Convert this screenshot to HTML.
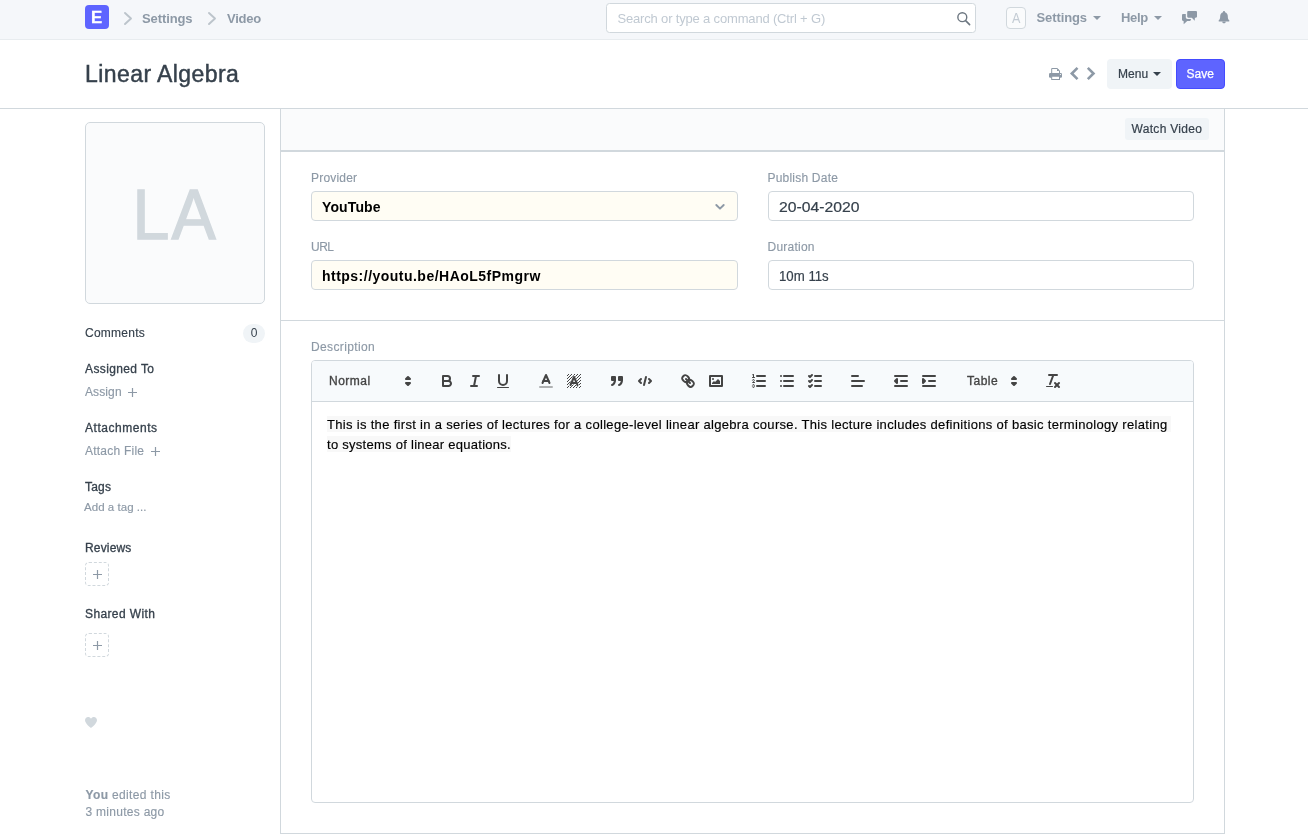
<!DOCTYPE html>
<html lang="en">
<head>
<meta charset="utf-8">
<title>Linear Algebra</title>
<style>
*{box-sizing:border-box;margin:0;padding:0}
html,body{width:1308px;height:838px;overflow:hidden;background:#fff}
body{font-family:"Liberation Sans",Arial,sans-serif;font-size:12px;color:#36414c;position:relative}
.abs{position:absolute;white-space:nowrap;line-height:1}
.t{position:absolute;white-space:nowrap;line-height:14px;height:14px}
.muted{color:#8d99a6;-webkit-text-stroke:.15px #8d99a6}
.navbar{position:absolute;left:0;top:0;width:1308px;height:40px;background:#f5f7fa;border-bottom:1px solid #e8ecef}
.pagehead{position:absolute;left:0;top:40px;width:1308px;height:69px;background:#fff;border-bottom:1px solid #d1d8dd}
.nb{font-weight:bold;font-size:13px;color:#8d99a6}
.lbl{color:#8d99a6;font-size:12px;-webkit-text-stroke:.15px #8d99a6}
.sh{font-size:12px;color:#36414c;-webkit-text-stroke:.3px #36414c}
.inp{position:absolute;height:30px;border:1px solid #d1d8dd;border-radius:4px;background:#fff}
.inp.b{background:#fffdf4}
.inp span{position:absolute;left:10px;white-space:nowrap}
svg{position:absolute;overflow:visible}
.qs{fill:none;stroke:#444;stroke-width:2;stroke-linecap:round;stroke-linejoin:round}
.qf{fill:#444}
.qt{stroke-width:1}
</style>
</head>
<body>
<div id="wrap" style="position:absolute;left:0;top:0;width:1308px;height:838px;will-change:transform">
<!-- NAVBAR -->
<div class="navbar"></div>
<div class="abs" style="left:85px;top:5px;width:24px;height:24px;background:#5e64ff;border-radius:4px"></div>
<div class="abs" style="left:84.700px;top:6px;width:24px;height:24px;color:#fff;font-weight:bold;font-size:16.800px;line-height:24px;text-align:center;-webkit-text-stroke:.3px #fff">E</div>
<svg style="left:123px;top:12px" width="10" height="13" viewBox="0 0 10 13"><path d="M2 1 L8 6.5 L2 12" fill="none" stroke="#bcc4cb" stroke-width="1.900" stroke-linecap="round" stroke-linejoin="round"/></svg>
<div class="t nb" style="left:142px;top:12px;letter-spacing:-.1px">Settings</div>
<svg style="left:207px;top:12px" width="10" height="13" viewBox="0 0 10 13"><path d="M2 1 L8 6.5 L2 12" fill="none" stroke="#bcc4cb" stroke-width="1.900" stroke-linecap="round" stroke-linejoin="round"/></svg>
<div class="t nb" style="left:227px;top:12px;letter-spacing:-.23px">Video</div>

<div class="abs" style="left:606px;top:3px;width:370px;height:30px;background:#fff;border:1px solid #d1d8dd;border-radius:3.500px"></div>
<div class="t" style="left:617.5px;top:12px;font-size:13px;color:#c0c9d2;letter-spacing:-.17px">Search or type a command (Ctrl + G)</div>
<svg style="left:956px;top:11.400px" width="15" height="15" viewBox="0 0 15 15"><circle cx="6.300" cy="6.200" r="4.450" fill="none" stroke="#6c7680" stroke-width="1.4"/><path d="M9.6 9.6 L13.6 13.6" stroke="#6c7680" stroke-width="1.6" stroke-linecap="round"/></svg>

<div class="abs" style="left:1006px;top:7px;width:20px;height:22px;border:1px solid #d1d8dd;border-radius:4px;background:#fafbfc;color:#c4ccd4;font-size:14px;line-height:21px;text-align:center"><span style="display:inline-block;transform:scaleX(.9) translateX(.5px)">A</span></div>
<div class="t nb" style="left:1036.5px;top:11px;letter-spacing:-.1px">Settings</div>
<svg style="left:1093px;top:16px" width="8" height="4" viewBox="0 0 8 4"><path d="M0 0h8L4 4z" fill="#8d99a6"/></svg>
<div class="t nb" style="left:1121px;top:11px;letter-spacing:-.34px">Help</div>
<svg style="left:1154px;top:16px" width="8" height="4" viewBox="0 0 8 4"><path d="M0 0h8L4 4z" fill="#8d99a6"/></svg>
<!-- comments icon -->
<svg style="left:1182px;top:11px" width="15" height="13" viewBox="0 0 15 13"><path d="M6.400 0h7.400c.7 0 1.200.5 1.200 1.200v4.300c0 .7-.5 1.200-1.200 1.200H12.900L12.700 9.800 9.800 6.700H6.400C5.700 6.700 5.200 6.200 5.200 5.500V1.200C5.200.5 5.700 0 6.400 0z" fill="#8d99a6"/><path d="M1.200 3H3.800v3.200C3.800 7.200 4.600 7.900 5.500 7.900H8.900v.9c0 .7-.5 1.200-1.200 1.200H5.200L1.700 13.200 1.600 10H1.200C.5 10 0 9.500 0 8.800V4.200C0 3.500.5 3 1.200 3z" fill="#8d99a6"/></svg>
<!-- bell -->
<svg style="left:1218px;top:10.500px" width="12" height="12.500" viewBox="0 0 12 12.500"><path d="M6 0C6.600 0 7 .4 7 1L7 1.200C8.700 1.700 9.800 3.200 9.800 5C9.800 7.600 10.400 8.600 11.300 9.500C11.600 9.800 11.500 10.400 11 10.400L1 10.400C.5 10.400 .4 9.800 .7 9.500C1.600 8.600 2.200 7.600 2.200 5C2.200 3.200 3.300 1.700 5 1.200L5 1C5 .4 5.400 0 6 0ZM4.300 10.700h3.400c0 .9-.8 1.600-1.700 1.600s-1.700-.7-1.700-1.600z" fill="#8d99a6"/></svg>

<!-- PAGE HEAD -->
<div class="pagehead"></div>
<div class="abs" style="left:85px;top:60px;font-size:23px;line-height:28px;color:#36414c;letter-spacing:.42px;-webkit-text-stroke:.45px #36414c">Linear Algebra</div>
<!-- print -->
<svg style="left:1049px;top:68px" width="13" height="12" viewBox="0 0 13 12"><path d="M2.700 5.500V.5h5.600L10.500 2.700V5.500" fill="#fff" stroke="#8d99a6" stroke-width="1"/><path d="M8 .5V3h2.500z" fill="#8d99a6"/><rect x="0" y="5" width="13" height="4.700" rx="1.200" fill="#8d99a6"/><rect x="2.700" y="8.200" width="7.800" height="3.300" fill="#fff" stroke="#8d99a6" stroke-width="1"/><circle cx="11.400" cy="6.500" r=".6" fill="#fff"/></svg>
<svg style="left:1070px;top:67px" width="9" height="13" viewBox="0 0 9 13"><path d="M7.500 .8 L1.800 6.500 L7.500 12.200" fill="none" stroke="#8d99a6" stroke-width="2.600" stroke-linejoin="miter"/></svg>
<svg style="left:1086px;top:67px" width="9" height="13" viewBox="0 0 9 13"><path d="M1.800 .8 L7.500 6.500 L1.800 12.200" fill="none" stroke="#8d99a6" stroke-width="2.600" stroke-linejoin="miter"/></svg>
<div class="abs" style="left:1107px;top:59px;width:65px;height:30px;background:#f0f4f7;border-radius:4px"></div>
<div class="t" style="left:1118px;top:67px;color:#36414c;letter-spacing:.08px;-webkit-text-stroke:.2px #36414c">Menu</div>
<svg style="left:1153px;top:72px" width="8" height="4" viewBox="0 0 8 4"><path d="M0 0h8L4 4z" fill="#36414c"/></svg>
<div class="abs" style="left:1176px;top:59px;width:49px;height:30px;background:#5e64ff;border:1px solid #444bff;border-radius:4px"></div>
<div class="t" style="left:1186.500px;top:67px;color:#fff;-webkit-text-stroke:.25px #fff">Save</div>

<!-- SIDEBAR -->
<div class="abs" style="left:85px;top:122px;width:180px;height:182px;border:1px solid #d1d8dd;border-radius:5px;background:#fafbfc"></div>
<div class="abs" style="left:84.300px;top:123.500px;width:180px;height:182px;text-align:center;font-size:70.500px;line-height:182px;color:#d1d8dd;-webkit-text-stroke:1.400px #d1d8dd;transform:scaleX(.94);transform-origin:91.500px 0"><span style="letter-spacing:2.200px">L</span>A</div>

<div class="t" style="left:85px;top:326px;letter-spacing:.25px;-webkit-text-stroke:.15px #36414c">Comments</div>
<div class="abs" style="left:243px;top:323.500px;width:22px;height:19px;border-radius:9.500px;background:#f0f4f7;text-align:center;line-height:19px;font-size:12px">0</div>

<div class="t sh" style="left:85px;top:362px;letter-spacing:0.38px">Assigned To</div>
<div class="t muted" style="left:85px;top:385px;letter-spacing:.11px">Assign</div>
<svg style="left:127.500px;top:387.500px" width="9" height="9" viewBox="0 0 9 9"><path d="M4.500 0v9M0 4.500h9" stroke="#8d99a6" stroke-width="1.200" fill="none"/></svg>

<div class="t sh" style="left:85px;top:421px;letter-spacing:0.53px">Attachments</div>
<div class="t muted" style="left:85px;top:444px;letter-spacing:.23px">Attach File</div>
<svg style="left:150.500px;top:446.500px" width="9" height="9" viewBox="0 0 9 9"><path d="M4.500 0v9M0 4.500h9" stroke="#8d99a6" stroke-width="1.200" fill="none"/></svg>

<div class="t sh" style="left:85px;top:480px;letter-spacing:0.22px">Tags</div>
<div class="t muted" style="left:84px;top:499.500px;font-size:11.5px;letter-spacing:.04px">Add a tag ...</div>

<div class="t sh" style="left:85px;top:541px;letter-spacing:0.16px">Reviews</div>
<div class="abs" style="left:85px;top:562px;width:24px;height:24px;border:1px dashed #d1d8dd;border-radius:4px"></div>
<svg style="left:92.500px;top:569.500px" width="9" height="9" viewBox="0 0 9 9"><path d="M4.500 0v9M0 4.500h9" stroke="#8d99a6" stroke-width="1.200" fill="none"/></svg>

<div class="t sh" style="left:85px;top:607px;letter-spacing:0.38px">Shared With</div>
<div class="abs" style="left:85px;top:633px;width:24px;height:24px;border:1px dashed #d1d8dd;border-radius:4px"></div>
<svg style="left:92.500px;top:640.500px" width="9" height="9" viewBox="0 0 9 9"><path d="M4.500 0v9M0 4.500h9" stroke="#8d99a6" stroke-width="1.200" fill="none"/></svg>

<svg style="left:85px;top:717px" width="12" height="11" viewBox="0 0 12 11"><path d="M6 11 C6 11 0 6.500 0 3.200 C0 1.300 1.400 0 3.100 0 C4.300 0 5.400.7 6 1.700 C6.600.7 7.700 0 8.900 0 C10.600 0 12 1.300 12 3.200 C12 6.500 6 11 6 11z" fill="#d1d8dd"/></svg>

<div class="t muted" style="left:85.500px;top:788px;letter-spacing:.35px"><b>You</b> edited this</div>
<div class="t muted" style="left:85.500px;top:805px;letter-spacing:.28px">3 minutes ago</div>

<!-- MAIN -->
<div class="abs" style="left:280px;top:109px;width:945px;height:725px;border:1px solid #d1d8dd;border-top:0"></div>
<div class="abs" style="left:281px;top:109px;width:943px;height:43px;background:#fafbfc;border-bottom:2px solid #d1d8dd"></div>
<div class="abs" style="left:1125px;top:118px;width:84px;height:22px;background:#f0f4f7;border-radius:3px"></div>
<div class="t" style="left:1131.500px;top:122px;color:#36414c;letter-spacing:.31px;-webkit-text-stroke:.2px #36414c">Watch Video</div>
<div class="abs" style="left:281px;top:320px;width:943px;height:1px;background:#d1d8dd"></div>

<div class="t lbl" style="left:311px;top:171px;letter-spacing:.19px">Provider</div>
<div class="inp b" style="left:311px;top:191px;width:427px"><span style="top:7.500px;line-height:15px;font-weight:bold;font-size:14px;color:#000;letter-spacing:.12px">YouTube</span></div>
<svg style="left:715px;top:203.500px" width="10" height="6" viewBox="0 0 10 6"><path d="M1.300 1 L5 4.700 L8.700 1" fill="none" stroke="#8d99a6" stroke-width="1.900" stroke-linecap="round" stroke-linejoin="round"/></svg>
<div class="t lbl" style="left:311px;top:240px;letter-spacing:-.5px">URL</div>
<div class="inp b" style="left:311px;top:260px;width:427px"><span style="top:7.500px;line-height:15px;font-weight:bold;font-size:14px;color:#000;letter-spacing:.48px">https://youtu.be/HAoL5fPmgrw</span></div>

<div class="t lbl" style="left:767.500px;top:171px;letter-spacing:.21px">Publish Date</div>
<div class="inp" style="left:768px;top:191px;width:426px"><span style="top:7px;line-height:16px;font-size:14px;color:#36414c;transform:scaleX(1.124);transform-origin:0 0;-webkit-text-stroke:.2px #36414c">20-04-2020</span></div>
<div class="t lbl" style="left:767.500px;top:240px;letter-spacing:.24px">Duration</div>
<div class="inp" style="left:768px;top:260px;width:426px"><span style="top:7px;line-height:16px;font-size:14px;color:#36414c;transform:scaleX(.944);transform-origin:0 0;-webkit-text-stroke:.2px #36414c">10m 11s</span></div>

<div class="t lbl" style="left:311px;top:340px;letter-spacing:.36px">Description</div>
<div class="abs" style="left:311px;top:360px;width:883px;height:443px;border:1px solid #d1d8dd;border-radius:4px;background:#fff"></div>
<div class="abs" style="left:312px;top:361px;width:881px;height:41px;background:#f7fafc;border-bottom:1px solid #d1d8dd;border-radius:3px 3px 0 0"></div>
<!--TB-->
<svg style="left:399px;top:372px" width="18" height="18" viewBox="0 0 18 18"><polygon class="qs" points="7 11 9 13 11 11 7 11"/><polygon class="qs" points="11 7 9 5 7 7 11 7"/></svg>
<svg style="left:438px;top:372px" width="18" height="18" viewBox="0 0 18 18"><path class="qs" d="M5,4H9.5A2.5,2.5,0,0,1,12,6.500v0A2.5,2.5,0,0,1,9.500,9H5V4Z"/><path class="qs" d="M5,9h5.500A2.500,2.500,0,0,1,13,11.500v0A2.500,2.500,0,0,1,10.500,14H5V9Z"/></svg>
<svg style="left:466px;top:372px" width="18" height="18" viewBox="0 0 18 18"><line class="qs" x1="7" x2="13" y1="4" y2="4"/><line class="qs" x1="5" x2="11" y1="14" y2="14"/><line class="qs" x1="8" x2="10" y1="14" y2="4"/></svg>
<svg style="left:494px;top:372px" width="18" height="18" viewBox="0 0 18 18"><path class="qs" d="M5,3V9a4.012,4.012,0,0,0,4,4H9a4.012,4.012,0,0,0,4-4V3"/><rect class="qf" height="1" rx="0.5" ry="0.5" width="12" x="3" y="15"/></svg>
<svg style="left:537px;top:372px" width="18" height="18" viewBox="0 0 18 18"><line class="qs" style="opacity:.4" x1="3" x2="15" y1="15" y2="15"/><polyline class="qs" points="5.500 11 9 3 12.500 11"/><line class="qs" x1="11.630" x2="6.380" y1="9" y2="9"/></svg>
<svg style="left:565px;top:372px" width="18" height="18" viewBox="0 0 18 18"><path class="qf" d="M3 2h1v1h-1zM6 2h1v1h-1zM9 2h1v1h-1zM12 2h1v1h-1zM15 2h1v1h-1zM2 3h1v1h-1zM5 3h1v1h-1zM8 3h1v1h-1zM11 3h1v1h-1zM14 3h1v1h-1zM4 4h1v1h-1zM7 4h1v1h-1zM10 4h1v1h-1zM13 4h1v1h-1zM3 5h1v1h-1zM6 5h1v1h-1zM9 5h1v1h-1zM12 5h1v1h-1zM15 5h1v1h-1zM2 6h1v1h-1zM5 6h1v1h-1zM8 6h1v1h-1zM11 6h1v1h-1zM14 6h1v1h-1zM4 7h1v1h-1zM7 7h1v1h-1zM10 7h1v1h-1zM13 7h1v1h-1zM3 8h1v1h-1zM6 8h1v1h-1zM9 8h1v1h-1zM12 8h1v1h-1zM15 8h1v1h-1zM2 9h1v1h-1zM5 9h1v1h-1zM8 9h1v1h-1zM11 9h1v1h-1zM14 9h1v1h-1zM4 10h1v1h-1zM7 10h1v1h-1zM10 10h1v1h-1zM13 10h1v1h-1zM3 11h1v1h-1zM6 11h1v1h-1zM9 11h1v1h-1zM12 11h1v1h-1zM15 11h1v1h-1zM2 12h1v1h-1zM5 12h1v1h-1zM8 12h1v1h-1zM11 12h1v1h-1zM14 12h1v1h-1zM4 13h1v1h-1zM7 13h1v1h-1zM10 13h1v1h-1zM13 13h1v1h-1zM3 14h1v1h-1zM6 14h1v1h-1zM9 14h1v1h-1zM12 14h1v1h-1zM15 14h1v1h-1zM2 15h1v1h-1zM5 15h1v1h-1zM8 15h1v1h-1zM11 15h1v1h-1zM14 15h1v1h-1z"/><polyline points="5.500 13 9 5 12.500 13" fill="none" stroke="#f7fafc" stroke-width="3" stroke-linecap="round" stroke-linejoin="round"/><line x1="11.630" x2="6.380" y1="11" y2="11" stroke="#f7fafc" stroke-width="3"/><polyline class="qs" points="5.500 13 9 5 12.500 13"/><line class="qs" x1="11.630" x2="6.380" y1="11" y2="11"/></svg>
<svg style="left:608px;top:372px" width="18" height="18" viewBox="0 0 18 18"><rect class="qs qf" height="3" width="3" x="4" y="5"/><rect class="qs qf" height="3" width="3" x="11" y="5"/><path class="qs qf" fill-rule="evenodd" d="M7,8c0,4.031-3,5-3,5"/><path class="qs qf" fill-rule="evenodd" d="M14,8c0,4.031-3,5-3,5"/></svg>
<svg style="left:636px;top:372px" width="18" height="18" viewBox="0 0 18 18"><polyline class="qs" points="5 7 3 9 5 11"/><polyline class="qs" points="13 7 15 9 13 11"/><line class="qs" x1="10" x2="8" y1="5" y2="13"/></svg>
<svg style="left:679px;top:372px" width="18" height="18" viewBox="0 0 18 18"><line class="qs" x1="7" x2="11" y1="7" y2="11"/><path class="qs" d="M8.900,4.577a3.476,3.476,0,0,1,.36,4.679A3.476,3.476,0,0,1,4.577,8.900C3.185,7.500,2.035,6.400,4.217,4.217S7.500,3.185,8.900,4.577Z"/><path class="qs" d="M13.423,9.100a3.476,3.476,0,0,0-4.679-.36,3.476,3.476,0,0,0,.36,4.679c1.392,1.392,2.500,2.542,4.679.36S14.815,10.500,13.423,9.100Z"/></svg>
<svg style="left:707px;top:372px" width="18" height="18" viewBox="0 0 18 18"><rect class="qs" height="10" width="12" x="3" y="4"/><circle class="qf" cx="6" cy="7" r="1"/><polyline class="qf" fill-rule="evenodd" points="5 12 5 11 7 9 8 10 11 7 13 9 13 12 5 12"/></svg>
<svg style="left:750px;top:372px" width="18" height="18" viewBox="0 0 18 18"><line class="qs" x1="7" x2="15" y1="4" y2="4"/><line class="qs" x1="7" x2="15" y1="9" y2="9"/><line class="qs" x1="7" x2="15" y1="14" y2="14"/><line class="qs qt" x1="2.500" x2="4.500" y1="5.500" y2="5.500"/><path class="qf" d="M3.500,6A0.500,0.500,0,0,1,3,5.500V3.085l-0.276.138A0.500,0.500,0,0,1,2.053,3c-0.124-.247-0.023-0.324.224-0.447l1-.5A0.500,0.500,0,0,1,4,2.500v3A0.500,0.500,0,0,1,3.500,6Z"/><path class="qs qt" d="M4.500,10.500h-2c0-.234,1.850-1.076,1.850-2.234A0.959,0.959,0,0,0,2.500,8.156"/><path class="qs qt" d="M2.500,14.846a0.959,0.959,0,0,0,1.850-.109A0.700,0.700,0,0,0,3.750,14a0.688,0.688,0,0,0,.6-0.736,0.959,0.959,0,0,0-1.850-.109"/></svg>
<svg style="left:778px;top:372px" width="18" height="18" viewBox="0 0 18 18"><line class="qs" x1="6" x2="15" y1="4" y2="4"/><line class="qs" x1="6" x2="15" y1="9" y2="9"/><line class="qs" x1="6" x2="15" y1="14" y2="14"/><line class="qs" x1="3" x2="3" y1="4" y2="4"/><line class="qs" x1="3" x2="3" y1="9" y2="9"/><line class="qs" x1="3" x2="3" y1="14" y2="14"/></svg>
<svg style="left:806px;top:372px" width="18" height="18" viewBox="0 0 18 18"><line class="qs" x1="9" x2="15" y1="4" y2="4"/><polyline class="qs" points="3 4 4 5 6 3"/><line class="qs" x1="9" x2="15" y1="14" y2="14"/><polyline class="qs" points="3 14 4 15 6 13"/><line class="qs" x1="9" x2="15" y1="9" y2="9"/><polyline class="qs" points="3 9 4 10 6 8"/></svg>
<svg style="left:849px;top:372px" width="18" height="18" viewBox="0 0 18 18"><line class="qs" x1="3" x2="15" y1="9" y2="9"/><line class="qs" x1="3" x2="13" y1="14" y2="14"/><line class="qs" x1="3" x2="9" y1="4" y2="4"/></svg>
<svg style="left:892px;top:372px" width="18" height="18" viewBox="0 0 18 18"><line class="qs" x1="3" x2="15" y1="14" y2="14"/><line class="qs" x1="3" x2="15" y1="4" y2="4"/><line class="qs" x1="9" x2="15" y1="9" y2="9"/><polyline class="qs" points="5 7 5 11 3 9 5 7"/></svg>
<svg style="left:920px;top:372px" width="18" height="18" viewBox="0 0 18 18"><line class="qs" x1="3" x2="15" y1="14" y2="14"/><line class="qs" x1="3" x2="15" y1="4" y2="4"/><line class="qs" x1="9" x2="15" y1="9" y2="9"/><polyline class="qs qf" points="3 7 3 11 5 9 3 7"/></svg>
<svg style="left:1005px;top:372px" width="18" height="18" viewBox="0 0 18 18"><polygon class="qs" points="7 11 9 13 11 11 7 11"/><polygon class="qs" points="11 7 9 5 7 7 11 7"/></svg>
<svg style="left:1044px;top:372px" width="18" height="18" viewBox="0 0 18 18"><line class="qs" x1="5" x2="13" y1="3" y2="3"/><line class="qs" x1="6" x2="9.350" y1="12" y2="3"/><line class="qs" x1="11" x2="15" y1="11" y2="15"/><line class="qs" x1="15" x2="11" y1="11" y2="15"/><rect class="qf" height="1" rx="0.5" ry="0.5" width="7" x="2" y="14"/></svg>
<div class="t" style="left:329px;top:374px;color:#444;letter-spacing:.5px;-webkit-text-stroke:.35px #444">Normal</div>
<div class="t" style="left:967px;top:374px;color:#444;letter-spacing:.5px;-webkit-text-stroke:.35px #444">Table</div>
<!--/TB-->
<div class="abs" style="left:327px;top:415px;font-size:13px;line-height:20px;color:#000;white-space:nowrap;-webkit-text-stroke:.15px #000"><span style="background:#f8f8f8;padding:1px 4px 0 0;letter-spacing:.315px">This is the first in a series of lectures for a college-level linear algebra course. This lecture includes definitions of basic terminology relating</span><br><span style="background:#f8f8f8;padding:1px 0 0 0;letter-spacing:.27px">to systems of linear equations.</span></div>
</div>
</body>
</html>
